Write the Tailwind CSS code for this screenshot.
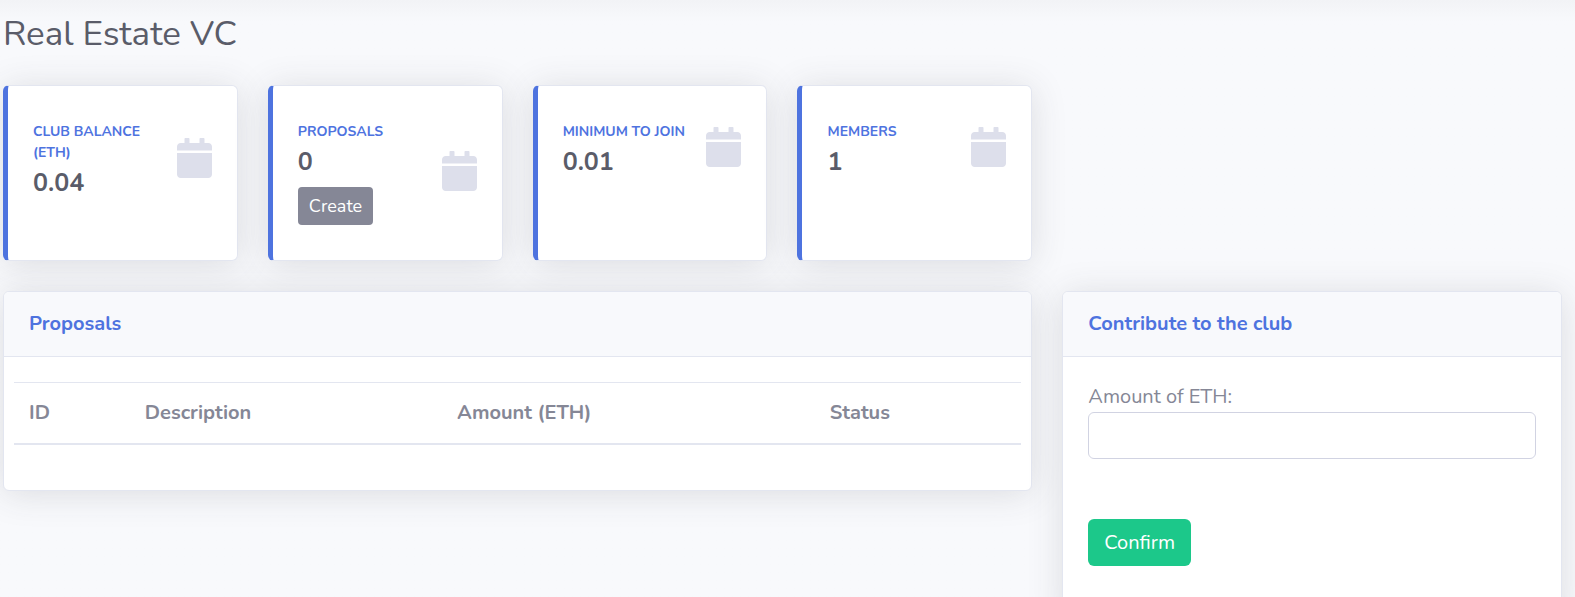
<!DOCTYPE html>
<html lang="en">
<head>
    <meta charset="UTF-8">
    <meta name="viewport" content="width=device-width, initial-scale=1.0">
    <title>Real Estate VC</title>
    <script src="https://cdn.jsdelivr.net/npm/@tailwindcss/browser@4"></script>
</head>
<body class="h-screen overflow-hidden bg-[#f8f9fc] font-[Nunito,Lato,sans-serif] text-[20px] leading-[30px] text-[#858796]">

    <!-- Calendar icon shared by the stat cards -->
    <svg class="hidden" aria-hidden="true">
        <symbol id="calendar" viewBox="0 0 448 512">
            <path d="M0 464c0 26.500 21.500 48 48 48h352c26.500 0 48-21.500 48-48V192H0v272zM448 160v-48c0-26.500-21.500-48-48-48h-48V12c0-6.600-5.400-12-12-12h-40c-6.600 0-12 5.400-12 12v52H160V12c0-6.600-5.400-12-12-12h-40c-6.600 0-12 5.400-12 12v52H48C21.500 64 0 85.500 0 112v48z" fill="currentColor"/>
        </symbol>
    </svg>

    <main class="bg-linear-to-b from-[#f2f3f6] to-[#f8f9fc] to-[22px] pt-3 pr-[13px] pl-[3px]">
        <h1 class="mb-[30px] text-[35px] leading-[43px] font-normal text-[#5a5c69]">Real Estate VC</h1>

        <div class="grid grid-cols-3 gap-[30px]">
            <!-- Stats -->
            <section class="col-span-2 grid grid-cols-4 gap-[30px]">
                <div class="min-h-[176px] rounded-md border border-l-[5px] border-[#e3e6f0] border-l-[#4e73df] bg-white px-[25px] py-[35px] shadow-[0_3px_35px_rgba(58,59,69,0.15)]">
                    <div class="flex items-center">
                        <div class="mr-2 flex-1">
                            <h2 class="mb-[5px] text-[14px] leading-[21px] font-bold text-[#4e73df] uppercase">Club Balance (ETH)</h2>
                            <p class="text-[25px] font-bold text-[#5a5c69]">0.04</p>
                        </div>
                        <div class="pb-1 text-[#dddfeb]"><svg class="h-[40px] w-[35px]" aria-hidden="true"><use href="#calendar"/></svg></div>
                    </div>
                </div>
                <div class="min-h-[176px] rounded-md border border-l-[5px] border-[#e3e6f0] border-l-[#4e73df] bg-white px-[25px] py-[35px] shadow-[0_3px_35px_rgba(58,59,69,0.15)]">
                    <div class="flex items-center">
                        <div class="mr-2 flex-1">
                            <h2 class="mb-[5px] text-[14px] leading-[21px] font-bold text-[#4e73df] uppercase">Proposals</h2>
                            <p class="text-[25px] font-bold text-[#5a5c69]">0</p>
                            <button type="button" class="mt-[10px] block rounded-[4px] bg-[#858796] px-[11px] py-[6px] text-[18px] leading-[26px] text-white">Create</button>
                        </div>
                        <div class="pb-1 text-[#dddfeb]"><svg class="h-[40px] w-[35px]" aria-hidden="true"><use href="#calendar"/></svg></div>
                    </div>
                </div>
                <div class="min-h-[176px] rounded-md border border-l-[5px] border-[#e3e6f0] border-l-[#4e73df] bg-white px-[25px] py-[35px] shadow-[0_3px_35px_rgba(58,59,69,0.15)]">
                    <div class="flex items-center">
                        <div class="mr-2 flex-1">
                            <h2 class="mb-[5px] text-[14px] leading-[21px] font-bold text-[#4e73df] uppercase">Minimum to join</h2>
                            <p class="text-[25px] font-bold text-[#5a5c69]">0.01</p>
                        </div>
                        <div class="pb-1 text-[#dddfeb]"><svg class="h-[40px] w-[35px]" aria-hidden="true"><use href="#calendar"/></svg></div>
                    </div>
                </div>
                <div class="min-h-[176px] rounded-md border border-l-[5px] border-[#e3e6f0] border-l-[#4e73df] bg-white px-[25px] py-[35px] shadow-[0_3px_35px_rgba(58,59,69,0.15)]">
                    <div class="flex items-center">
                        <div class="mr-2 flex-1">
                            <h2 class="mb-[5px] text-[14px] leading-[21px] font-bold text-[#4e73df] uppercase">Members</h2>
                            <p class="text-[25px] font-bold text-[#5a5c69]">1</p>
                        </div>
                        <div class="pb-1 text-[#dddfeb]"><svg class="h-[40px] w-[35px]" aria-hidden="true"><use href="#calendar"/></svg></div>
                    </div>
                </div>
            </section>

            <!-- Proposals -->
            <section class="col-span-2 col-start-1 self-start overflow-hidden rounded-md border border-[#e3e6f0] bg-white shadow-[0_3px_35px_rgba(58,59,69,0.15)]">
                <h2 class="border-b border-[#e3e6f0] bg-[#f8f9fc] px-[25px] py-[20px] leading-[24px] font-bold text-[#4e73df]">Proposals</h2>
                <div class="px-[10px] pt-[25px] pb-[45px]">
                    <table class="w-full table-fixed text-left">
                        <thead>
                            <tr class="border-t border-b-2 border-t-[#e3e6f0] border-b-[#e3e6f0]">
                                <th class="w-[11.5%] px-[15px] py-[15px] font-bold">ID</th>
                                <th class="w-[31%] px-[15px] py-[15px] font-bold">Description</th>
                                <th class="w-[37%] px-[15px] py-[15px] font-bold">Amount (ETH)</th>
                                <th class="px-[15px] py-[15px] font-bold">Status</th>
                            </tr>
                        </thead>
                        <tbody></tbody>
                    </table>
                </div>
            </section>

            <!-- Contribute -->
            <section class="self-start overflow-hidden rounded-md border border-[#e3e6f0] bg-white shadow-[0_3px_35px_rgba(58,59,69,0.15)]">
                <h2 class="border-b border-[#e3e6f0] bg-[#f8f9fc] px-[25px] py-[20px] leading-[24px] font-bold text-[#4e73df]">Contribute to the club</h2>
                <form class="p-[25px]">
                    <label for="amount" class="block">Amount of ETH:</label>
                    <input id="amount" type="text" class="block h-[47px] w-full rounded-md border border-[#d1d3e2] bg-white px-[15px] text-[#6e707e]">
                    <button type="button" class="mt-[60px] mb-[30px] block rounded-md bg-[#1cc88a] px-[16px] py-2 leading-[31px] text-white">Confirm</button>
                </form>
            </section>
        </div>
    </main>

</body>
</html>
